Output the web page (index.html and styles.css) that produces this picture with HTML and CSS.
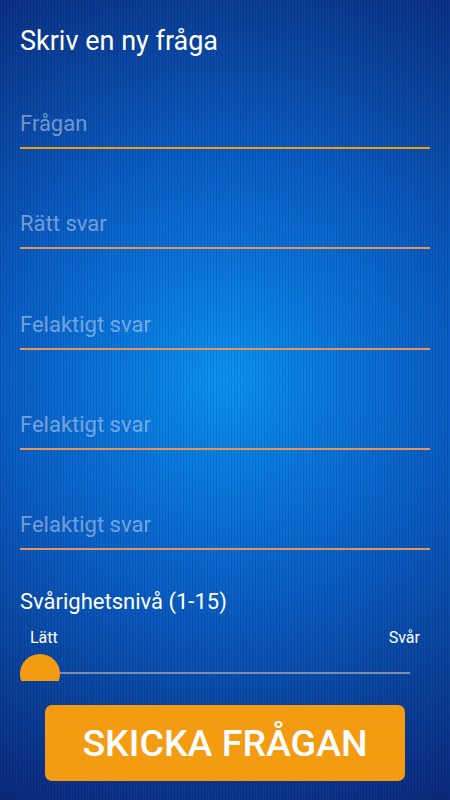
FILE: index.html
```html
<!DOCTYPE html>
<html lang="sv">
<head>
<meta charset="utf-8">
<title>Skriv en ny fråga</title>
<link rel="stylesheet" href="styles.css">
</head>
<body>
<main class="screen">
  <h1 class="title">Skriv en ny fråga</h1>
  <div class="field field-active">Frågan</div>
  <div class="field">Rätt svar</div>
  <div class="field">Felaktigt svar</div>
  <div class="field">Felaktigt svar</div>
  <div class="field">Felaktigt svar</div>
  <div class="level-label">Svårighetsnivå (1-15)</div>
  <div class="range-labels"><span>Lätt</span><span>Svår</span></div>
  <div class="slider">
    <div class="track"></div>
    <div class="thumb"></div>
  </div>
  <button class="submit">SKICKA FRÅGAN</button>
</main>
</body>
</html>
```
FILE: styles.css
```css
html, body {
  margin: 0;
  padding: 0;
  height: 100%;
}
body {
  font-family: Roboto, "Noto Sans", sans-serif;
  color: #fff;
  background-color: #0b3a8e;
  background-image:
    repeating-linear-gradient(90deg, rgba(0, 10, 60, 0.14) 0 1px, rgba(0,0,0,0) 1px 3px),
    radial-gradient(circle at 50% 47.5%, #0a94f4 0px, #0a78dc 110px, #0a5ec4 225px, #0b3f96 375px, #0b2a7c 470px);
  min-height: 800px;
  overflow: hidden;
}
.screen {
  display: flex;
  flex-direction: column;
  padding: 25px 20px 0;
}
.title {
  margin: 0;
  font-size: 27px;
  font-weight: 400;
  line-height: 32px;
}
.field {
  margin-top: 62.3px;
  font-size: 22px;
  line-height: 26px;
  padding-bottom: 10px;
  color: rgba(195, 210, 235, 0.58);
  border-bottom: 2px solid #e8935a;
}
.field-active {
  margin-top: 54px;
  border-bottom-color: #f39c12;
}
.level-label {
  margin-top: 39px;
  font-size: 22px;
  line-height: 26px;
}
.range-labels {
  margin-top: 13px;
  padding: 0 10px;
  display: flex;
  justify-content: space-between;
  font-size: 16px;
  line-height: 20px;
}
.slider {
  position: relative;
  margin-top: 3px;
  height: 30px;
  overflow: hidden;
}
.track {
  margin: 21px 0 0 40px;
  width: 350px;
  height: 2px;
  background: #7d8cb0;
}
.thumb {
  position: absolute;
  left: 0;
  top: 3px;
  width: 40px;
  height: 40px;
  border-radius: 50%;
  background: #f39c12;
}
.submit {
  align-self: center;
  margin-top: 24px;
  width: 360px;
  height: 76px;
  border: none;
  border-radius: 7px;
  background: #f39c12;
  color: #fff;
  font-family: Roboto, "Noto Sans", sans-serif;
  font-size: 37.5px;
  font-weight: 500;
  padding: 0;
  display: flex;
  align-items: center;
  justify-content: center;
}
```
